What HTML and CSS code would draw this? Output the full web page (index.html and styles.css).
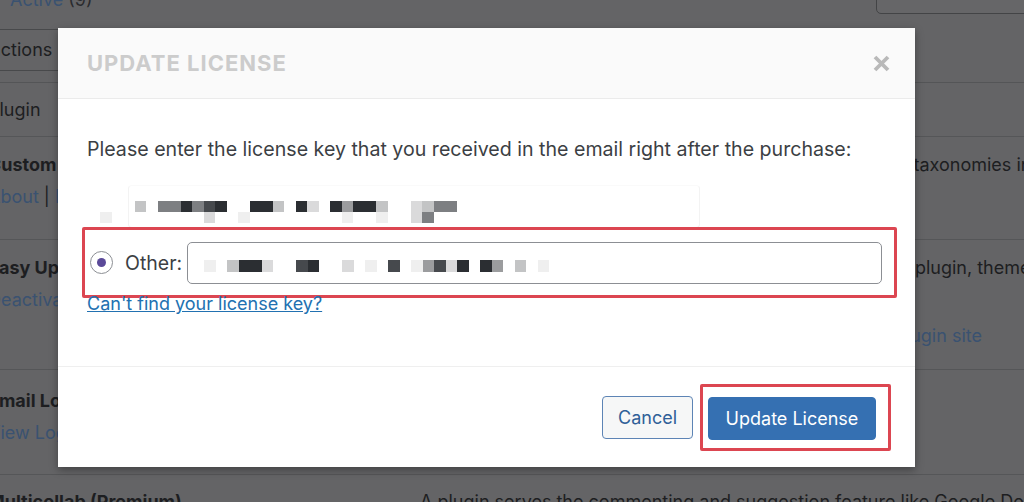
FILE: index.html
```html
<!DOCTYPE html>
<html lang="en">
<head>
<meta charset="utf-8">
<title>Update License</title>
<link rel="stylesheet" href="styles.css">
</head>
<body>
<div class="page">
  <div class="top">
    <div class="views"><a class="link">Active</a> <span class="count">(9)</span></div>
    <div class="search">Search installed plugins...</div>
  </div>
  <div class="tablenav">
    <div class="bulk">Bulk actions</div>
  </div>
  <div class="table">
    <div class="thead">
      <div class="col-name">Plugin</div>
      <div class="col-desc">Description</div>
    </div>
    <div class="row row-1">
      <div class="col-name">
        <div class="name">Custom Post Type UI</div>
        <div class="actions"><a class="link">About</a> | <a class="link">Deactivate</a></div>
      </div>
      <div class="col-desc">
        <div>Admin UI for creating new custom post types and custom taxonomies in WordPress</div>
        <div>Version 1.13.4 | By WebDevStudios | <a class="link">View details</a></div>
      </div>
    </div>
    <div class="row row-2">
      <div class="col-name">
        <div class="name">Easy Updates Manager</div>
        <div class="actions"><a class="link">Deactivate</a> | <a class="link">Settings</a></div>
      </div>
      <div class="col-desc">
        <div>Manage all of your WordPress updates, including its core, plugin, theme, and translation updates.</div>
        <div>Works with multisite</div>
        <div class="meta">Version 10.0.15 | By Easy Updates Manager Team | <a class="link">Visit plugin site</a></div>
      </div>
    </div>
    <div class="row row-3">
      <div class="col-name">
        <div class="name">Email Log</div>
        <div class="actions"><a class="link">View Logs</a> | <a class="link">Settings</a></div>
      </div>
      <div class="col-desc">
        <div>Log and view all outgoing emails from WordPress.</div>
        <div>Version 2.4.8 | By Sudar | <a class="link">View details</a></div>
      </div>
    </div>
    <div class="row row-4">
      <div class="col-name">
        <div class="name">Multicollab (Premium)</div>
      </div>
      <div class="col-desc">
        <div>A plugin serves the commenting and suggestion feature like Google Docs within the WordPress editor.</div>
      </div>
    </div>
  </div>
</div>

<div class="modal" role="dialog" aria-label="Update License">
  <div class="modal-head">
    <h2 class="modal-title">UPDATE LICENSE</h2>
    <button class="close" aria-label="Close">
      <svg width="17" height="17" viewBox="0 0 17 17"><path d="M2 2 L15 15 M15 2 L2 15" stroke="#b9b9b9" stroke-width="3.8" fill="none"/></svg>
    </button>
  </div>
  <div class="modal-body">
    <p class="intro">Please enter the license key that you received in the email right after the purchase:</p>
    <div class="key-field">
      <div class="mosaic mosaic-2row">
        <span></span><span></span><span></span><span class="l"></span><span></span><span class="m"></span><span class="m"></span><span class="d"></span><span class="m"></span><span class="dg"></span><span class="d"></span><span></span><span></span><span class="d"></span><span class="d"></span><span class="l"></span><span></span><span class="d"></span><span class="xl"></span><span></span><span class="d"></span><span class="g"></span><span class="d"></span><span class="d"></span><span class="l"></span><span></span><span></span><span class="xl"></span><span class="l"></span><span class="m"></span><span class="m"></span>
        <span class="xxl"></span><span></span><span></span><span></span><span></span><span></span><span></span><span></span><span></span><span class="xl"></span><span></span><span></span><span class="xxl"></span><span></span><span></span><span></span><span></span><span></span><span></span><span></span><span></span><span class="xxl"></span><span></span><span></span><span class="xxl"></span><span></span><span></span><span class="xl"></span><span class="m"></span><span></span><span></span>
      </div>
    </div>
    <div class="other-box">
      <span class="radio"><span class="radio-dot"></span></span>
      <span class="other-label">Other:</span>
      <div class="key-input">
        <div class="mosaic">
          <span class="xxl"></span><span></span><span class="l"></span><span class="d"></span><span class="d"></span><span class="xl"></span><span></span><span></span><span class="dg"></span><span class="d"></span><span></span><span></span><span class="xl"></span><span></span><span class="xxl"></span><span></span><span class="dg"></span><span></span><span class="xxl"></span><span class="g"></span><span class="dg"></span><span class="xl"></span><span class="d"></span><span></span><span class="d"></span><span class="g"></span><span></span><span class="l"></span><span></span><span class="xxl"></span>
        </div>
      </div>
    </div>
    <a class="help-link">Can't find your license key?</a>
  </div>
  <div class="modal-foot">
    <button class="btn btn-cancel">Cancel</button>
    <div class="highlight">
      <button class="btn btn-primary">Update License</button>
    </div>
  </div>
</div>
</body>
</html>
```

FILE: styles.css
```css
* { box-sizing: border-box; }
html, body { margin: 0; padding: 0; }
body {
  width: 1024px;
  height: 502px;
  overflow: hidden;
  background: #646466;
  font-family: Inter, "Noto Sans", sans-serif;
  color: #1d1e21;
  position: relative;
}
.link { color: #3a5271; text-decoration: none; }

/* dimmed page behind */
.page { font-size: 18px; }
.top {
  height: 29px;
  display: flex;
  justify-content: space-between;
  align-items: flex-start;
}
.views { margin-top: -12px; padding-left: 10px; line-height: 24px; }
.count { color: #2a2b2e; }
.search {
  margin-top: -27px;
  margin-right: -52px;
  width: 200px;
  height: 41px;
  border: 1px solid #434446;
  border-radius: 5px;
  background: #666668;
  padding: 0 12px;
  display: flex;
  align-items: flex-end;
  line-height: 24px;
  padding-bottom: 10px;
  white-space: nowrap;
  overflow: hidden;
  color: #2a2b2e;
}
.tablenav { height: 53px; }
.bulk {
  margin-left: -60px;
  width: 220px;
  height: 42px;
  border: 1px solid #48494b;
  border-radius: 4px;
  padding-left: 8px;
  line-height: 40px;
}
.table {
  margin-left: -12px;
  border-top: 1px solid #545557;
}
.thead {
  display: flex;
  height: 54px;
  align-items: center;
  border-bottom: 1px solid #555658;
}
.col-name { width: 432px; flex: none; }
.col-desc { flex: 1; white-space: nowrap; overflow: hidden; }
.row {
  display: flex;
  padding-top: 12px;
  line-height: 32px;
  border-bottom: 1px solid #555658;
}
.row-1 { height: 103px; }
.row-2 { height: 130px; }
.row-2 .meta { margin-top: 4px; }
.row-3 { height: 105px; padding-top: 15px; }
.row-4 { height: 60px; padding-top: 11px; }
.name { font-weight: 700; white-space: nowrap; }
.actions { white-space: nowrap; }

/* modal */
.modal {
  position: absolute;
  left: 58px;
  top: 28px;
  width: 857px;
  height: 439px;
  background: #fff;
  display: flex;
  flex-direction: column;
  box-shadow: 0 3px 8px rgba(0,0,0,0.35);
  color: #3c3f44;
}
.modal-head {
  height: 71px;
  flex: none;
  background: #fafafa;
  border-bottom: 1px solid #ebebeb;
  display: flex;
  align-items: center;
  justify-content: space-between;
  padding: 0 25px 0 29px;
}
.modal-title {
  margin: 0;
  font-size: 22px;
  font-weight: 700;
  letter-spacing: 1px;
  color: #cccccc;
}
.close {
  border: 0;
  background: none;
  padding: 0;
  width: 17px;
  height: 17px;
  display: block;
}
.close svg { display: block; }
.modal-body {
  flex: 1;
  padding: 37px 0 0 29px;
}
.intro {
  margin: 0;
  font-size: 19.6px;
  line-height: 26px;
}
.key-field {
  margin: 23px 0 0 41px;
  width: 572px;
  height: 43px;
  border: 1px solid #f3f3f3;
  border-top-color: #fafafa;
  border-radius: 4px;
  padding-top: 15px;
}
.mosaic {
  display: grid;
  grid-template-columns: repeat(31, 11.5px);
  grid-auto-rows: 11px;
}
.mosaic-2row { margin-left: -29px; }
.mosaic span { display: block; }
.mosaic .d { background: #2b2e32; }
.mosaic .dg { background: #46494d; }
.mosaic .m { background: #7d7f82; }
.mosaic .g { background: #9b9c9e; }
.mosaic .l { background: #c3c4c5; }
.mosaic .xl { background: #dadadb; }
.mosaic .xxl { background: #efefef; }
.other-box {
  margin: -1px 0 0 -5px;
  width: 815px;
  height: 71px;
  border: 3px solid #dc4651;
  border-radius: 2px;
  display: flex;
  align-items: center;
  padding: 0 12px 0 5px;
}
.radio {
  width: 23px;
  height: 23px;
  flex: none;
  border: 1px solid #8c8f94;
  border-radius: 50%;
  display: flex;
  align-items: center;
  justify-content: center;
}
.radio-dot {
  width: 9px;
  height: 9px;
  border-radius: 50%;
  background: #5b4a99;
}
.other-label {
  margin-left: 12px;
  font-size: 19.5px;
  flex: none;
}
.key-input {
  margin-left: 5px;
  flex: 1;
  height: 42px;
  border: 1px solid #8c8f94;
  border-radius: 5px;
  padding: 17px 0 0 16px;
}
.key-input .mosaic { grid-auto-rows: 12px; }
.help-link {
  display: block;
  width: max-content;
  margin-top: -5px;
  font-size: 18px;
  line-height: 22px;
  color: #2271b1;
  text-decoration: underline;
}
.modal-foot {
  height: 101px;
  flex: none;
  border-top: 1px solid #efefef;
  display: flex;
  align-items: center;
  justify-content: flex-end;
  padding-right: 24px;
}
.btn {
  font-family: inherit;
  font-size: 18px;
  height: 43px;
  border-radius: 4px;
  cursor: pointer;
}
.btn-cancel {
  width: 91px;
  background: #f6f7f7;
  border: 1px solid #5d84b5;
  color: #2f6098;
}
.highlight {
  margin-left: 7px;
  border: 3px solid #dc4651;
  border-radius: 2px;
  padding: 10px 12px 8px 5px;
}
.btn-primary {
  display: block;
  width: 168px;
  background: #3570b2;
  border: 1px solid #3570b2;
  color: #fff;
}
```
